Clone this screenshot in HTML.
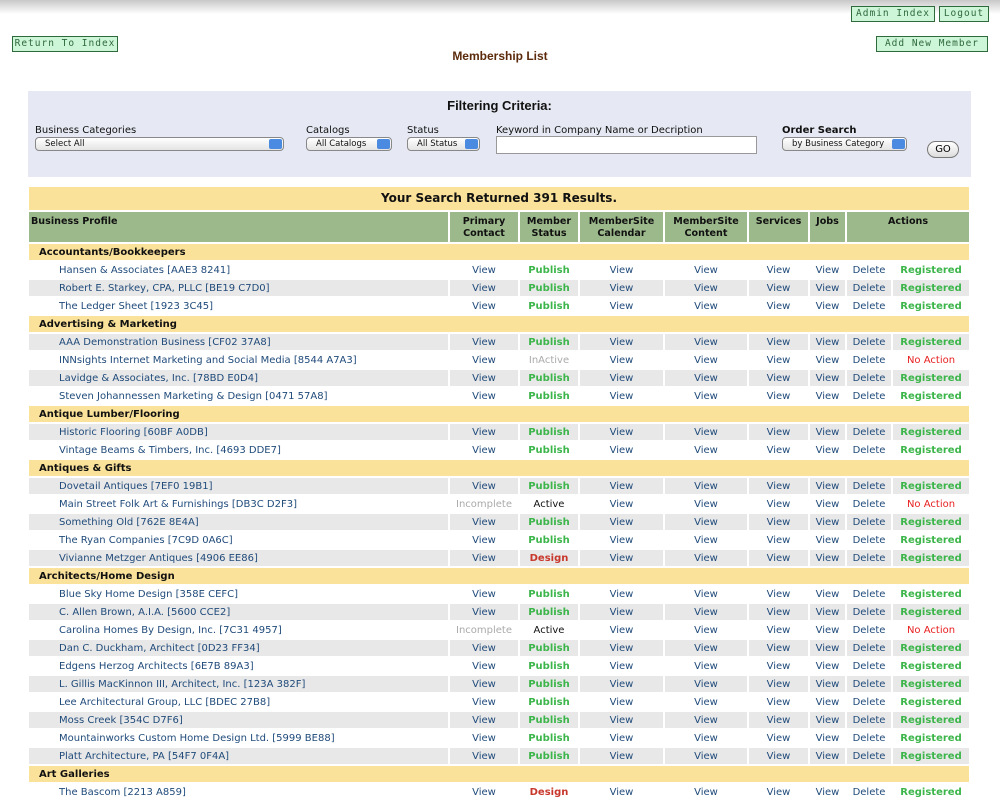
<!DOCTYPE html>
<html><head><meta charset="utf-8"><style>
*{margin:0;padding:0;box-sizing:border-box}
body{width:1000px;height:800px;overflow:hidden;background:#fff;font-family:"DejaVu Sans","Liberation Sans",sans-serif;position:relative}
.topbar{position:absolute;left:0;top:0;width:1000px;height:14px;background:linear-gradient(#c8c8c8,#fff)}
.btn{position:absolute;height:16px;background:#cdf5d8;border:1px solid #2f6a3d;color:#2f6a3d;font-family:"DejaVu Sans Mono","Liberation Mono",monospace;font-size:9.5px;letter-spacing:1px;line-height:14px;text-align:center;white-space:nowrap;overflow:hidden}
.title{position:absolute;left:0;width:1000px;top:49px;text-align:center;font:bold 12px "Liberation Sans",sans-serif;color:#5a2a0a}
.filter{position:absolute;left:28px;top:91px;width:943px;height:86px;background:#e6e9f3}
.filter .h{position:absolute;left:0;width:943px;top:7px;text-align:center;font:bold 13px "Liberation Sans",sans-serif;color:#111}
.lbl{position:absolute;top:34px;font-size:10px;color:#111}
.sel{position:absolute;top:46px;height:14px;border:1px solid #888;border-radius:4px;background:linear-gradient(#fff,#e4e4e4);font-size:8.5px;line-height:12px;padding-left:9px;color:#111}
.sel:after{content:"";position:absolute;right:1px;top:1px;width:13px;height:10px;border-radius:2px;background:#4a8ae0}
.kw{position:absolute;left:468px;top:45px;width:261px;height:18px;background:#fff;border:1px solid #999}
.go{position:absolute;left:899px;top:50px;width:32px;height:17px;border:1px solid #777;border-radius:9px;background:linear-gradient(#fff,#ddd);font-size:10px;line-height:15px;text-align:center}
table{position:absolute;left:27px;top:185px;border-spacing:2px;font-size:10px;table-layout:fixed;width:944px}
td{height:16px;padding:2px 0 0 0;text-align:center;color:#1f4a7a;white-space:nowrap;overflow:hidden;line-height:14px}
.res td{height:23px;padding:0;background:#fae29a;font:bold 12px "DejaVu Sans",sans-serif;color:#111;line-height:23px}
.hd td{height:30px;background:#9cb98b;font-weight:bold;color:#111;line-height:12px;vertical-align:top;padding-top:4px;font-size:9.6px}
.hd td.l{text-align:left;padding-left:2px}
.cat td{background:#fae29a;font-weight:bold;color:#111;text-align:left;padding-left:10px}
td.n{text-align:left;padding-left:30px}
.g td{background:#e8e8e8}
.p{color:#3cb54a;font-weight:bold}
.d{color:#c8372c;font-weight:bold}
.na{color:#e82020}
.gr{color:#aaa}
.bk{color:#111}
</style></head><body>
<div class="topbar"></div>
<div class="btn" style="left:851px;top:6px;width:84px">Admin Index</div>
<div class="btn" style="left:939px;top:6px;width:50px">Logout</div>
<div class="btn" style="left:12px;top:36px;width:106px">Return To Index</div>
<div class="btn" style="left:876px;top:36px;width:112px">Add New Member</div>
<div class="title">Membership List</div>
<div class="filter">
<div class="h">Filtering Criteria:</div>
<div class="lbl" style="left:7px">Business Categories</div>
<div class="lbl" style="left:278px">Catalogs</div>
<div class="lbl" style="left:379px">Status</div>
<div class="lbl" style="left:468px">Keyword in Company Name or Decription</div>
<div class="lbl" style="left:754px;font-weight:bold">Order Search</div>
<div class="sel" style="left:7px;width:249px">Select All</div>
<div class="sel" style="left:278px;width:86px">All Catalogs</div>
<div class="sel" style="left:379px;width:73px">All Status</div>
<div class="kw"></div>
<div class="sel" style="left:754px;width:125px">by Business Category</div>
<div class="go">GO</div>
</div>
<table>
<colgroup><col style="width:419px"><col style="width:68px"><col style="width:58px"><col style="width:83px"><col style="width:82px"><col style="width:59px"><col style="width:35px"><col style="width:44px"><col style="width:76px"></colgroup>
<tr class="res"><td colspan="9">Your Search Returned 391 Results.</td></tr>
<tr class="hd"><td class="l">Business Profile</td><td>Primary<br>Contact</td><td>Member<br>Status</td><td>MemberSite<br>Calendar</td><td>MemberSite<br>Content</td><td>Services</td><td>Jobs</td><td colspan="2">Actions</td></tr>
<tr class="cat"><td colspan="9">Accountants/Bookkeepers</td></tr>
<tr><td class="n">Hansen &amp; Associates [AAE3 8241]</td><td>View</td><td class="p">Publish</td><td>View</td><td>View</td><td>View</td><td>View</td><td>Delete</td><td class="p">Registered</td></tr>
<tr class="g"><td class="n">Robert E. Starkey, CPA, PLLC [BE19 C7D0]</td><td>View</td><td class="p">Publish</td><td>View</td><td>View</td><td>View</td><td>View</td><td>Delete</td><td class="p">Registered</td></tr>
<tr><td class="n">The Ledger Sheet [1923 3C45]</td><td>View</td><td class="p">Publish</td><td>View</td><td>View</td><td>View</td><td>View</td><td>Delete</td><td class="p">Registered</td></tr>
<tr class="cat"><td colspan="9">Advertising &amp; Marketing</td></tr>
<tr class="g"><td class="n">AAA Demonstration Business [CF02 37A8]</td><td>View</td><td class="p">Publish</td><td>View</td><td>View</td><td>View</td><td>View</td><td>Delete</td><td class="p">Registered</td></tr>
<tr><td class="n">INNsights Internet Marketing and Social Media [8544 A7A3]</td><td>View</td><td class="gr">InActive</td><td>View</td><td>View</td><td>View</td><td>View</td><td>Delete</td><td class="na">No Action</td></tr>
<tr class="g"><td class="n">Lavidge &amp; Associates, Inc. [78BD E0D4]</td><td>View</td><td class="p">Publish</td><td>View</td><td>View</td><td>View</td><td>View</td><td>Delete</td><td class="p">Registered</td></tr>
<tr><td class="n">Steven Johannessen Marketing &amp; Design [0471 57A8]</td><td>View</td><td class="p">Publish</td><td>View</td><td>View</td><td>View</td><td>View</td><td>Delete</td><td class="p">Registered</td></tr>
<tr class="cat"><td colspan="9">Antique Lumber/Flooring</td></tr>
<tr class="g"><td class="n">Historic Flooring [60BF A0DB]</td><td>View</td><td class="p">Publish</td><td>View</td><td>View</td><td>View</td><td>View</td><td>Delete</td><td class="p">Registered</td></tr>
<tr><td class="n">Vintage Beams &amp; Timbers, Inc. [4693 DDE7]</td><td>View</td><td class="p">Publish</td><td>View</td><td>View</td><td>View</td><td>View</td><td>Delete</td><td class="p">Registered</td></tr>
<tr class="cat"><td colspan="9">Antiques &amp; Gifts</td></tr>
<tr class="g"><td class="n">Dovetail Antiques [7EF0 19B1]</td><td>View</td><td class="p">Publish</td><td>View</td><td>View</td><td>View</td><td>View</td><td>Delete</td><td class="p">Registered</td></tr>
<tr><td class="n">Main Street Folk Art &amp; Furnishings [DB3C D2F3]</td><td class="gr">Incomplete</td><td class="bk">Active</td><td>View</td><td>View</td><td>View</td><td>View</td><td>Delete</td><td class="na">No Action</td></tr>
<tr class="g"><td class="n">Something Old [762E 8E4A]</td><td>View</td><td class="p">Publish</td><td>View</td><td>View</td><td>View</td><td>View</td><td>Delete</td><td class="p">Registered</td></tr>
<tr><td class="n">The Ryan Companies [7C9D 0A6C]</td><td>View</td><td class="p">Publish</td><td>View</td><td>View</td><td>View</td><td>View</td><td>Delete</td><td class="p">Registered</td></tr>
<tr class="g"><td class="n">Vivianne Metzger Antiques [4906 EE86]</td><td>View</td><td class="d">Design</td><td>View</td><td>View</td><td>View</td><td>View</td><td>Delete</td><td class="p">Registered</td></tr>
<tr class="cat"><td colspan="9">Architects/Home Design</td></tr>
<tr><td class="n">Blue Sky Home Design [358E CEFC]</td><td>View</td><td class="p">Publish</td><td>View</td><td>View</td><td>View</td><td>View</td><td>Delete</td><td class="p">Registered</td></tr>
<tr class="g"><td class="n">C. Allen Brown, A.I.A. [5600 CCE2]</td><td>View</td><td class="p">Publish</td><td>View</td><td>View</td><td>View</td><td>View</td><td>Delete</td><td class="p">Registered</td></tr>
<tr><td class="n">Carolina Homes By Design, Inc. [7C31 4957]</td><td class="gr">Incomplete</td><td class="bk">Active</td><td>View</td><td>View</td><td>View</td><td>View</td><td>Delete</td><td class="na">No Action</td></tr>
<tr class="g"><td class="n">Dan C. Duckham, Architect [0D23 FF34]</td><td>View</td><td class="p">Publish</td><td>View</td><td>View</td><td>View</td><td>View</td><td>Delete</td><td class="p">Registered</td></tr>
<tr><td class="n">Edgens Herzog Architects [6E7B 89A3]</td><td>View</td><td class="p">Publish</td><td>View</td><td>View</td><td>View</td><td>View</td><td>Delete</td><td class="p">Registered</td></tr>
<tr class="g"><td class="n">L. Gillis MacKinnon III, Architect, Inc. [123A 382F]</td><td>View</td><td class="p">Publish</td><td>View</td><td>View</td><td>View</td><td>View</td><td>Delete</td><td class="p">Registered</td></tr>
<tr><td class="n">Lee Architectural Group, LLC [BDEC 27B8]</td><td>View</td><td class="p">Publish</td><td>View</td><td>View</td><td>View</td><td>View</td><td>Delete</td><td class="p">Registered</td></tr>
<tr class="g"><td class="n">Moss Creek [354C D7F6]</td><td>View</td><td class="p">Publish</td><td>View</td><td>View</td><td>View</td><td>View</td><td>Delete</td><td class="p">Registered</td></tr>
<tr><td class="n">Mountainworks Custom Home Design Ltd. [5999 BE88]</td><td>View</td><td class="p">Publish</td><td>View</td><td>View</td><td>View</td><td>View</td><td>Delete</td><td class="p">Registered</td></tr>
<tr class="g"><td class="n">Platt Architecture, PA [54F7 0F4A]</td><td>View</td><td class="p">Publish</td><td>View</td><td>View</td><td>View</td><td>View</td><td>Delete</td><td class="p">Registered</td></tr>
<tr class="cat"><td colspan="9">Art Galleries</td></tr>
<tr><td class="n">The Bascom [2213 A859]</td><td>View</td><td class="d">Design</td><td>View</td><td>View</td><td>View</td><td>View</td><td>Delete</td><td class="p">Registered</td></tr>
</table>
</body></html>
